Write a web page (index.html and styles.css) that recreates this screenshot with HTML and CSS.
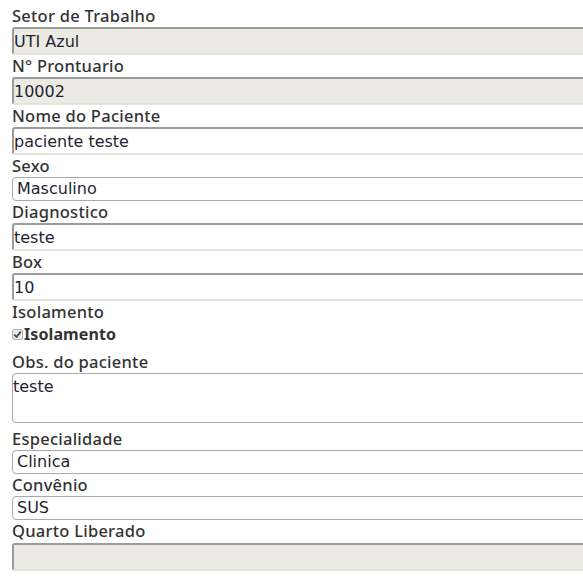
FILE: index.html
```html
<!DOCTYPE html>
<html lang="pt-BR">
<head>
<meta charset="utf-8">
<title>Paciente</title>
<link rel="stylesheet" href="styles.css">
</head>
<body>
<form class="form">
  <div class="field">
    <label class="lbl">Setor de Trabalho</label>
    <input class="txt ro" type="text" value="UTI Azul" readonly>
  </div>
  <div class="field">
    <label class="lbl">N° Prontuario</label>
    <input class="txt ro" type="text" value="10002" readonly>
  </div>
  <div class="field">
    <label class="lbl">Nome do Paciente</label>
    <input class="txt" type="text" value="paciente teste">
  </div>
  <div class="field">
    <label class="lbl">Sexo</label>
    <select class="sel"><option>Masculino</option></select>
  </div>
  <div class="field">
    <label class="lbl">Diagnostico</label>
    <input class="txt" type="text" value="teste">
  </div>
  <div class="field">
    <label class="lbl">Box</label>
    <input class="txt" type="text" value="10">
  </div>
  <div class="field">
    <label class="lbl">Isolamento</label>
    <div class="check-row">
      <span class="check"><svg width="9" height="9" viewBox="0 0 9 9"><path d="M1.2 4.6 L3.5 7 L7.8 1.6" fill="none" stroke="#444" stroke-width="1.8"/></svg></span>
      <span class="check-lbl">Isolamento</span>
    </div>
  </div>
  <div class="field field-area">
    <label class="lbl">Obs. do paciente</label>
    <textarea class="area">teste</textarea>
  </div>
  <div class="field">
    <label class="lbl">Especialidade</label>
    <select class="sel"><option>Clinica</option></select>
  </div>
  <div class="field">
    <label class="lbl">Convênio</label>
    <select class="sel"><option>SUS</option></select>
  </div>
  <div class="field field-last">
    <label class="lbl">Quarto Liberado</label>
    <input class="txt ro" type="text" value="" readonly>
  </div>
</form>
</body>
</html>
```

FILE: styles.css
```css
html, body {
  margin: 0;
  padding: 0;
  overflow: hidden;
  background: #fff;
}

.form {
  padding: 5px 0 0 12px;
  width: 720px;
}

.field {
  display: flex;
  flex-direction: column;
}

.lbl {
  display: block;
  height: 22px;
  line-height: 22px;
  font-family: "Noto Sans", sans-serif;
  font-size: 16.5px;
  font-weight: 500;
  letter-spacing: 0.25px;
  color: #333;
}

.txt {
  box-sizing: border-box;
  display: block;
  width: 720px;
  height: 28px;
  margin: 0;
  padding: 0;
  border-style: solid;
  border-width: 2px;
  border-color: #9b9b9b #e4e4df #e4e4df #9b9b9b;
  border-radius: 3px;
  background: #fff;
  font-family: "DejaVu Sans", sans-serif;
  font-size: 16px;
  color: #1f1f33;
  outline: none;
}

.txt.ro {
  background: #ebebe4;
}

.sel {
  box-sizing: border-box;
  display: block;
  width: 720px;
  height: 24px;
  margin: 0;
  padding: 0 0 0 4px;
  border: 1px solid #a9a9a9;
  border-radius: 4px;
  background: #fff;
  -webkit-appearance: none;
  appearance: none;
  font-family: "DejaVu Sans", sans-serif;
  font-size: 16px;
  line-height: 22px;
  color: #1f1f33;
}

.check-row {
  box-sizing: border-box;
  display: flex;
  align-items: center;
  height: 28px;
  padding-bottom: 6px;
  gap: 1px;
}

.check {
  box-sizing: border-box;
  width: 11px;
  height: 11px;
  border: 1px solid #b5b5b5;
  border-radius: 2px;
  background: #e8e8e8;
  display: flex;
  align-items: center;
  justify-content: center;
}

.check-lbl {
  font-family: "Noto Sans", sans-serif;
  font-size: 16px;
  font-weight: 700;
  letter-spacing: 0.1px;
  color: #333;
}

.field-area {
  margin-bottom: 5px;
}

.field-last .lbl {
  height: 23px;
}

.area {
  box-sizing: border-box;
  display: block;
  width: 720px;
  height: 50px;
  margin: 0;
  padding: 3px 0 0 0;
  border: 1px solid #a9a9a9;
  border-radius: 4px;
  resize: none;
  font-family: "DejaVu Sans", sans-serif;
  font-size: 16px;
  color: #1f1f33;
  outline: none;
}
```
